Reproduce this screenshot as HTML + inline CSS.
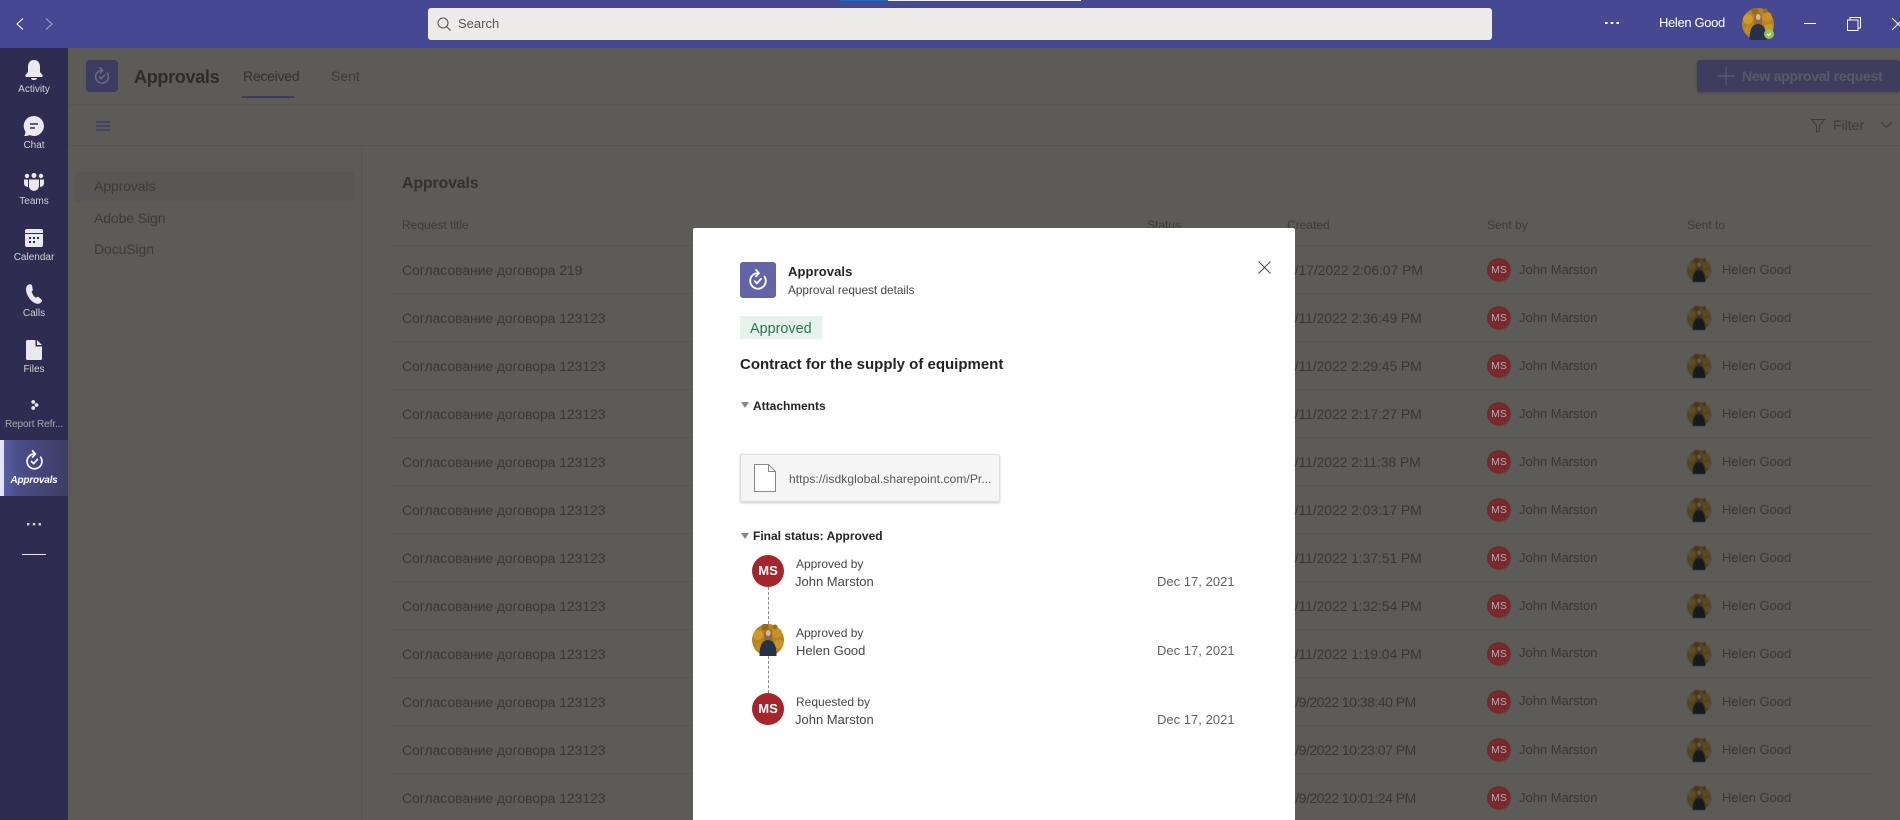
<!DOCTYPE html>
<html><head><meta charset="utf-8"><title>Approvals</title>
<style>
html,body{margin:0;padding:0;width:1900px;height:820px;overflow:hidden;background:#5c5b58;font-family:"Liberation Sans","Noto Sans CJK SC",sans-serif}
.a{position:absolute}
.t{position:absolute;white-space:nowrap;line-height:20px;height:20px}
svg{position:absolute;display:block;overflow:visible}
.nav{color:#d2d2d8;font-size:10px;left:0;width:68px;text-align:center}
.rl{position:absolute;left:392px;width:1481px;height:1px;background:#565553}
.h{font-size:12px;color:#3c3b39}
.rt{font-size:14px;color:#383735;left:402px;letter-spacing:-.08px}
.d{font-size:14px;color:#383735;left:1287px;letter-spacing:-.1px}
.d9{left:1288px;letter-spacing:-.5px}
.n{font-size:13px;color:#383735;letter-spacing:-.02px}
.ms{position:absolute;left:1487px;width:24px;height:24px;border-radius:50%;background:#752a2c;color:#b8aaaa;font-size:10.5px;font-weight:normal;line-height:24px;text-align:center}
.ph{left:1687px;width:24px;height:24px;filter:brightness(.5) saturate(.7) blur(.4px)}
.lb{font-size:12px;color:#484644}
.v{font-size:13px;color:#484644}
.md{font-size:13px;color:#616161;left:1157px;letter-spacing:.02px}
.big{position:absolute;left:752px;width:32px;height:32px;border-radius:50%;background:#a4262c;color:#fff;font-size:13px;font-weight:bold;line-height:32px;text-align:center}
</style></head><body>
<svg width="0" height="0" style="position:absolute"><defs>
<symbol id="p" viewBox="0 0 32 32">
<circle cx="16" cy="16" r="16" fill="#b5841f"/>
<circle cx="6" cy="11" r="5" fill="#cf9a2a"/><circle cx="25" cy="9" r="5" fill="#c99226"/><circle cx="7" cy="22" r="4" fill="#bf8a22"/><circle cx="27" cy="20" r="4.500" fill="#cc9628"/><circle cx="13" cy="3" r="3.500" fill="#96691c"/><circle cx="23" cy="3" r="2.500" fill="#98701f"/>
<path d="M12.300 12c-.6-4 .5-7.500 3.700-7.500s4.500 3.500 4 8c-.2 1.500.3 3 .5 4h-8.500c.3-1.500.5-3 .3-4.500z" fill="#96693a"/>
<ellipse cx="16.200" cy="9" rx="2.400" ry="3" fill="#d9b89c"/>
<path d="M7.500 32c0-7 1-12 4-14.500 2.500-2 6-2 9 0 3 2.500 4 7.500 4 14.500z" fill="#273246"/>
</symbol>
<symbol id="ap" viewBox="0 0 24 24"><g fill="none" stroke="currentColor" stroke-width="2" stroke-linecap="round" stroke-linejoin="round"><path d="M12 4.500a8.500 8.500 0 1 0 7 3.700"/><path d="M9.800 1l3.200 3.500L9.800 8"/><path d="M8.500 13.200l2.400 2.400 4.400-4.800"/></g></symbol>
</defs></svg>

<!-- top bar -->
<div class="a" style="left:0;top:0;width:1900px;height:48px;background:#464892"></div>
<div class="a" style="left:840px;top:0;width:48px;height:1px;background:#0078d4"></div>
<div class="a" style="left:888px;top:0;width:193px;height:1px;background:#f2f2f2"></div>
<svg style="left:16px;top:18px" width="8" height="12"><path d="M7 0.500L1 6l6 5.500" fill="none" stroke="#fff" stroke-width="1.100"/></svg>
<svg style="left:45px;top:18px" width="8" height="12"><path d="M1 0.500L7 6l-6 5.500" fill="none" stroke="#a3a5d2" stroke-width="1.100"/></svg>
<div class="a" style="left:428px;top:8px;width:1064px;height:32px;background:#edebe9;border-radius:3px"></div>
<svg style="left:437px;top:17px" width="14" height="14"><circle cx="6" cy="6" r="5" fill="none" stroke="#555" stroke-width="1.100"/><path d="M9.600 9.600L13.500 13.500" stroke="#555" stroke-width="1.100"/></svg>
<div class="t" style="left:458px;top:14px;font-size:13px;color:#555">Search</div>
<svg style="left:1605px;top:22px" width="14" height="3"><rect x="0" y="0" width="2.600" height="2" fill="#fff"/><rect x="5.700" y="0" width="2.600" height="2" fill="#fff"/><rect x="11.400" y="0" width="2.600" height="2" fill="#fff"/></svg>
<div class="t" style="left:1659px;top:13px;font-size:13px;color:#fff;letter-spacing:-.35px">Helen Good</div>
<svg style="left:1742px;top:8px" width="32" height="32"><use href="#p" width="32" height="32"/></svg>
<div class="a" style="left:1764px;top:29px;width:10px;height:10px;border-radius:50%;background:#92c353"></div>
<svg style="left:1766px;top:31px" width="6" height="6"><path d="M1 3l1.500 1.500L5 1.800" fill="none" stroke="#fff" stroke-width="1"/></svg>
<div class="a" style="left:1804px;top:23px;width:12px;height:1px;background:#fff"></div>
<svg style="left:1847px;top:17px" width="14" height="14"><path d="M3 3V.5h10.500V11H11" fill="none" stroke="#fff" stroke-width="1"/><rect x=".5" y="3" width="10.500" height="10.500" fill="none" stroke="#fff" stroke-width="1"/></svg>
<svg style="left:1892px;top:18px" width="12" height="12"><path d="M0 0l12 12M12 0L0 12" stroke="#fff" stroke-width="1"/></svg>

<!-- sidebar -->
<div class="a" style="left:0;top:48px;width:68px;height:772px;background:#2e2c50"></div>
<svg style="left:25px;top:60px" width="18" height="20"><path fill="#e8e8ee" d="M9 0C4.500 0 3 3.500 3 7v5L.5 15C0 16 .5 17 1.500 17h15c1 0 1.500-1 1-2L15 12V7c0-3.500-1.500-7-6-7zM6 18h6c0 1.500-1.500 2-3 2s-3-.5-3-2z"/></svg>
<div class="t nav" style="top:80px">Activity</div>
<svg style="left:24px;top:116px" width="20" height="20"><path fill="#e8e8ee" d="M10 0a10 10 0 1 1-4.200 19.100C4 19.800 2 20 0 20c1-1 1.400-2.500 1.400-4.400A10 10 0 0 1 10 0z"/><path d="M6 8h8M6 12h5" stroke="#2e2c50" stroke-width="1.500"/></svg>
<div class="t nav" style="top:136px">Chat</div>
<svg style="left:24px;top:173px" width="20" height="18"><g fill="#e8e8ee"><circle cx="10" cy="2.500" r="2.500"/><circle cx="3" cy="3" r="2.200"/><circle cx="17" cy="3" r="2.200"/><path d="M5 6.500h10v6.500a5 5 0 0 1-10 0z"/><path d="M0 6.500h4V14C2 14 0 12.500 0 10.500zM16 6.500h4v4c0 2-2 3.500-4 3.500z"/></g></svg>
<div class="t nav" style="top:192px">Teams</div>
<svg style="left:25px;top:229px" width="18" height="18"><rect width="18" height="18" rx="2" fill="#e8e8ee"/><rect y="4" width="18" height="1" fill="#2e2c50"/><g fill="#2e2c50"><rect x="4" y="8" width="2" height="2"/><rect x="8" y="8" width="2" height="2"/><rect x="12" y="8" width="2" height="2"/><rect x="4" y="12" width="2" height="2"/><rect x="8" y="12" width="2" height="2"/></g></svg>
<div class="t nav" style="top:248px">Calendar</div>
<svg style="left:26px;top:284px" width="16" height="20"><path fill="#e8e8ee" d="M3 .5C1 1 0 3 0 5c0 6 5 13 10 14.500 2.500 1 5-.5 6-2.500 0-1-.5-1.500-1-2l-2.500-2c-1-.5-2 0-2.500.8C8 13 6 9.500 5.700 7.500c.8-.5 1.300-1.500 1-2.500L6 1.500C5.500.5 4 0 3 .5z"/></svg>
<div class="t nav" style="top:304px">Calls</div>
<svg style="left:26px;top:340px" width="16" height="20"><path fill="#e8e8ee" d="M1.500 0H9.500V6.500H16V18.500Q16 20 14.500 20H1.500Q0 20 0 18.500V1.500Q0 0 1.500 0zM11 0l5 5h-5z"/></svg>
<div class="t nav" style="top:360px">Files</div>
<svg style="left:31px;top:400px" width="8" height="10"><g fill="#e8e8ee"><circle cx="2.200" cy="2" r="1.900"/><circle cx="5.500" cy="5" r="1.900"/><circle cx="2.200" cy="8" r="1.900"/></g></svg>
<div class="t nav" style="top:415px;color:#a9a9b5;letter-spacing:-.1px">Report Refr...</div>
<div class="a" style="left:0;top:440px;width:68px;height:56px;background:linear-gradient(90deg,#5d60aa 0,#4a4c86 30%,#3c3d66 100%)"></div>
<div class="a" style="left:0;top:440px;width:4px;height:56px;background:#e3e2f7"></div>
<svg style="left:24px;top:450px;color:#f3f3f6" width="21" height="21"><use href="#ap" width="21" height="21"/></svg>
<div class="t nav" style="top:471px;color:#fff;font-style:italic;font-weight:bold;letter-spacing:-.2px">Approvals</div>
<svg style="left:27px;top:523px" width="14" height="3"><rect width="2.400" height="2.400" fill="#d0d0d8"/><rect x="5.800" width="2.400" height="2.400" fill="#d0d0d8"/><rect x="11.600" width="2.400" height="2.400" fill="#d0d0d8"/></svg>
<div class="a" style="left:22px;top:554px;width:24px;height:1px;background:#e8e8ee"></div>

<!-- header -->
<div class="a" style="left:86px;top:60px;width:32px;height:32px;border-radius:3px;background:#3d3b5f"></div>
<svg style="left:93px;top:67px;color:#6d6c83" width="18" height="18"><use href="#ap" width="18" height="18"/></svg>
<div class="t" style="left:134px;top:67px;font-size:18px;font-weight:bold;color:#2d2c2b;letter-spacing:-.3px">Approvals</div>
<div class="t" style="left:243px;top:66px;font-size:14px;color:#333230;letter-spacing:-.25px">Received</div>
<div class="a" style="left:242px;top:96px;width:52px;height:2px;background:#3b3a5c"></div>
<div class="t" style="left:331px;top:66px;font-size:14px;color:#3c3b39">Sent</div>
<div class="a" style="left:1697px;top:60px;width:203px;height:32px;border-radius:3px;background:#3f3d5e;box-shadow:0 1px 2px #4a4947"></div>
<svg style="left:1717px;top:67px" width="18" height="18"><path d="M9 0v18M0 9h18" stroke="#5f5e70" stroke-width="1.200"/></svg>
<div class="t" style="left:1742px;top:66px;font-size:14px;font-weight:bold;color:#5a5967;letter-spacing:-.25px">New approval request</div>
<div class="a" style="left:68px;top:104px;width:1832px;height:1px;background:#565553"></div>
<div class="a" style="left:68px;top:145px;width:1832px;height:1px;background:#565553"></div>
<div class="a" style="left:96px;top:121px;width:14px;height:1.500px;background:#434262"></div>
<div class="a" style="left:96px;top:125px;width:14px;height:1.500px;background:#434262"></div>
<div class="a" style="left:96px;top:129px;width:14px;height:1.500px;background:#434262"></div>
<svg style="left:1811px;top:119px" width="14" height="13"><path d="M.5.500h13L8.500 6.500v5.500l-3 1V6.500z" fill="none" stroke="#3c3b39" stroke-width="1"/></svg>
<div class="t" style="left:1833px;top:115px;font-size:14px;color:#3c3b39">Filter</div>
<svg style="left:1881px;top:122px" width="11" height="6"><path d="M0 0l5.500 5.500L11 0" fill="none" stroke="#3c3b39" stroke-width="1"/></svg>

<!-- left panel -->
<div class="a" style="left:361px;top:146px;width:1px;height:674px;background:#555452"></div>
<div class="a" style="left:75px;top:172px;width:279px;height:30px;background:#585755;border-radius:3px"></div>
<div class="t" style="left:94px;top:176px;font-size:14px;color:#3c3b39;letter-spacing:-.1px">Approvals</div>
<div class="t" style="left:94px;top:208px;font-size:14px;color:#3c3b39;letter-spacing:-.1px">Adobe Sign</div>
<div class="t" style="left:94px;top:239px;font-size:14px;color:#3c3b39;letter-spacing:-.1px">DocuSign</div>

<!-- table -->
<div class="t" style="left:402px;top:174px;font-size:16px;font-weight:bold;color:#33322f;letter-spacing:-.2px">Approvals</div>
<div class="t h" style="left:402px;top:215px">Request title</div>
<div class="t h" style="left:1147px;top:215px">Status</div>
<div class="t h" style="left:1287px;top:215px">Created</div>
<div class="t h" style="left:1487px;top:215px">Sent by</div>
<div class="t h" style="left:1687px;top:215px">Sent to</div>
<div class="rl" style="top:245px"></div><div class="rl" style="top:293px"></div><div class="rl" style="top:341px"></div><div class="rl" style="top:389px"></div><div class="rl" style="top:437px"></div><div class="rl" style="top:485px"></div><div class="rl" style="top:533px"></div><div class="rl" style="top:581px"></div><div class="rl" style="top:629px"></div><div class="rl" style="top:677px"></div><div class="rl" style="top:725px"></div><div class="rl" style="top:773px"></div>

<div class="t rt" style="top:260px">Согласование договора 219</div><div class="t d" style="top:260px">1/17/2022 2:06:07 PM</div><div class="ms" style="top:258px">MS</div><div class="t n" style="left:1519px;top:260px">John Marston</div><svg class="ph" style="top:258px"><use href="#p" width="24" height="24"/></svg><div class="t n" style="left:1722px;top:260px">Helen Good</div>
<div class="t rt" style="top:308px">Согласование договора 123123</div><div class="t d" style="top:308px">1/11/2022 2:36:49 PM</div><div class="ms" style="top:306px">MS</div><div class="t n" style="left:1519px;top:308px">John Marston</div><svg class="ph" style="top:306px"><use href="#p" width="24" height="24"/></svg><div class="t n" style="left:1722px;top:308px">Helen Good</div>
<div class="t rt" style="top:356px">Согласование договора 123123</div><div class="t d" style="top:356px">1/11/2022 2:29:45 PM</div><div class="ms" style="top:354px">MS</div><div class="t n" style="left:1519px;top:356px">John Marston</div><svg class="ph" style="top:354px"><use href="#p" width="24" height="24"/></svg><div class="t n" style="left:1722px;top:356px">Helen Good</div>
<div class="t rt" style="top:404px">Согласование договора 123123</div><div class="t d" style="top:404px">1/11/2022 2:17:27 PM</div><div class="ms" style="top:402px">MS</div><div class="t n" style="left:1519px;top:404px">John Marston</div><svg class="ph" style="top:402px"><use href="#p" width="24" height="24"/></svg><div class="t n" style="left:1722px;top:404px">Helen Good</div>
<div class="t rt" style="top:452px">Согласование договора 123123</div><div class="t d" style="top:452px">1/11/2022 2:11:38 PM</div><div class="ms" style="top:450px">MS</div><div class="t n" style="left:1519px;top:452px">John Marston</div><svg class="ph" style="top:450px"><use href="#p" width="24" height="24"/></svg><div class="t n" style="left:1722px;top:452px">Helen Good</div>
<div class="t rt" style="top:500px">Согласование договора 123123</div><div class="t d" style="top:500px">1/11/2022 2:03:17 PM</div><div class="ms" style="top:498px">MS</div><div class="t n" style="left:1519px;top:500px">John Marston</div><svg class="ph" style="top:498px"><use href="#p" width="24" height="24"/></svg><div class="t n" style="left:1722px;top:500px">Helen Good</div>
<div class="t rt" style="top:548px">Согласование договора 123123</div><div class="t d" style="top:548px">1/11/2022 1:37:51 PM</div><div class="ms" style="top:546px">MS</div><div class="t n" style="left:1519px;top:548px">John Marston</div><svg class="ph" style="top:546px"><use href="#p" width="24" height="24"/></svg><div class="t n" style="left:1722px;top:548px">Helen Good</div>
<div class="t rt" style="top:596px">Согласование договора 123123</div><div class="t d" style="top:596px">1/11/2022 1:32:54 PM</div><div class="ms" style="top:594px">MS</div><div class="t n" style="left:1519px;top:596px">John Marston</div><svg class="ph" style="top:594px"><use href="#p" width="24" height="24"/></svg><div class="t n" style="left:1722px;top:596px">Helen Good</div>
<div class="t rt" style="top:644px">Согласование договора 123123</div><div class="t d" style="top:644px">1/11/2022 1:19:04 PM</div><div class="ms" style="top:642px">MS</div><div class="t n" style="left:1519px;top:643px">John Marston</div><svg class="ph" style="top:642px"><use href="#p" width="24" height="24"/></svg><div class="t n" style="left:1722px;top:644px">Helen Good</div>
<div class="t rt" style="top:692px">Согласование договора 123123</div><div class="t d d9" style="top:692px">1/9/2022 10:38:40 PM</div><div class="ms" style="top:690px">MS</div><div class="t n" style="left:1519px;top:691px">John Marston</div><svg class="ph" style="top:690px"><use href="#p" width="24" height="24"/></svg><div class="t n" style="left:1722px;top:692px">Helen Good</div>
<div class="t rt" style="top:740px">Согласование договора 123123</div><div class="t d d9" style="top:740px">1/9/2022 10:23:07 PM</div><div class="ms" style="top:738px">MS</div><div class="t n" style="left:1519px;top:740px">John Marston</div><svg class="ph" style="top:738px"><use href="#p" width="24" height="24"/></svg><div class="t n" style="left:1722px;top:740px">Helen Good</div>
<div class="t rt" style="top:788px">Согласование договора 123123</div><div class="t d d9" style="top:788px">1/9/2022 10:01:24 PM</div><div class="ms" style="top:786px">MS</div><div class="t n" style="left:1519px;top:788px">John Marston</div><svg class="ph" style="top:786px"><use href="#p" width="24" height="24"/></svg><div class="t n" style="left:1722px;top:788px">Helen Good</div>

<!-- modal -->
<div class="a" style="left:693px;top:228px;width:602px;height:592px;background:#fff;border-radius:2px 2px 0 0"></div>
<div class="a" style="left:740px;top:262px;width:36px;height:36px;border-radius:3px;background:#6264a7"></div>
<svg style="left:747px;top:269px;color:#fff" width="22" height="22"><use href="#ap" width="22" height="22"/></svg>
<div class="t" style="left:788px;top:262px;font-size:13px;font-weight:bold;color:#252423;letter-spacing:.1px">Approvals</div>
<div class="t" style="left:788px;top:280px;font-size:11.800px;color:#484644">Approval request details</div>
<svg style="left:1258px;top:261px" width="13" height="13"><path d="M.5.500l12 12M12.500.500l-12 12" stroke="#484644" stroke-width="1"/></svg>
<div class="a" style="left:740px;top:316px;width:82px;height:23px;background:#e7f2ec"></div>
<div class="t" style="left:750px;top:319px;font-size:14.400px;color:#237b4b">Approved</div>
<div class="t" style="left:740px;top:355px;font-size:15px;font-weight:bold;color:#252423">Contract for the supply of equipment</div>
<svg style="left:741px;top:402px" width="8" height="6"><path d="M0 0h8L4 6z" fill="#8a8886"/></svg>
<div class="t" style="left:753px;top:396px;font-size:12px;font-weight:bold;color:#252423">Attachments</div>
<div class="a" style="left:740px;top:454px;width:258px;height:46px;background:#f5f5f5;border:1px solid #e1dfdd;border-radius:2px;box-shadow:0 1px 2px #c8c6c4"></div>
<svg style="left:754px;top:464px" width="22" height="28"><path d="M.5.500h14l7 7v20H.500z" fill="#fff" stroke="#8a8886" stroke-width="1"/><path d="M14.500.500v7h7" fill="none" stroke="#8a8886" stroke-width="1"/></svg>
<div class="t" style="left:789px;top:469px;font-size:12px;color:#555;letter-spacing:.08px">https://isdkglobal.sharepoint.com/Pr...</div>
<svg style="left:741px;top:533px" width="8" height="6"><path d="M0 0h8L4 6z" fill="#8a8886"/></svg>
<div class="t" style="left:753px;top:526px;font-size:12px;font-weight:bold;color:#252423">Final status: Approved</div>
<div class="a" style="left:768px;top:587px;width:0;height:37px;border-left:1px dashed #8a8886"></div>
<div class="a" style="left:768px;top:656px;width:0;height:37px;border-left:1px dashed #8a8886"></div>
<div class="big" style="top:555px">MS</div>
<div class="t lb" style="left:796px;top:554px">Approved by</div>
<div class="t v" style="left:795px;top:572px">John Marston</div>
<div class="t md" style="top:572px">Dec 17, 2021</div>
<svg style="left:752px;top:624px" width="32" height="32"><use href="#p" width="32" height="32"/></svg>
<div class="t lb" style="left:796px;top:623px">Approved by</div>
<div class="t v" style="left:796px;top:641px">Helen Good</div>
<div class="t md" style="top:641px">Dec 17, 2021</div>
<div class="big" style="top:693px">MS</div>
<div class="t lb" style="left:796px;top:692px">Requested by</div>
<div class="t v" style="left:795px;top:710px">John Marston</div>
<div class="t md" style="top:710px">Dec 17, 2021</div>
</body></html>
